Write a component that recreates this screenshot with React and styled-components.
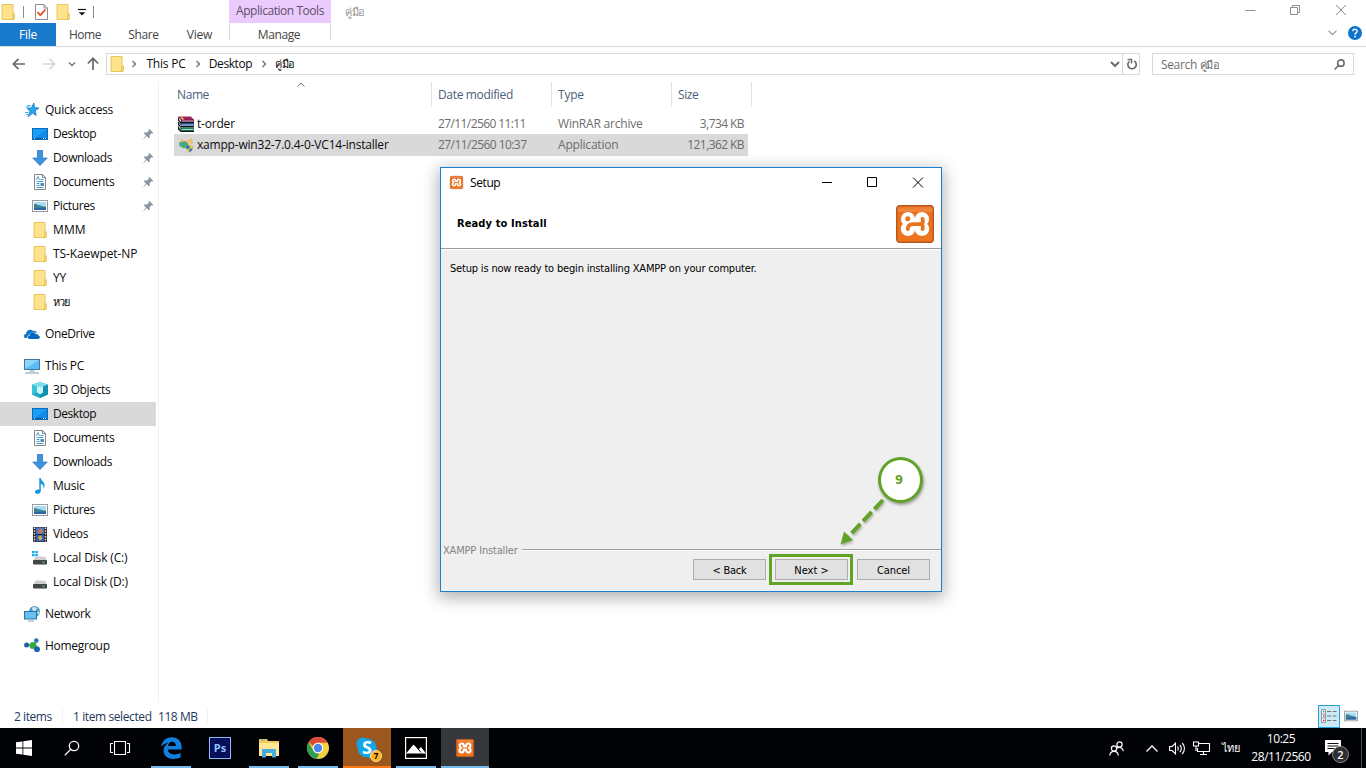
import React from "react";
import styled, { createGlobalStyle } from "styled-components";

const UI = `"Open Sans", "Noto Sans", "Liberation Sans", sans-serif`;
const TAHOMA = `"DejaVu Sans Condensed", "DejaVu Sans", sans-serif`;

const Global = createGlobalStyle`
  * { box-sizing: border-box; }
  body { margin: 0; background: #fff; overflow: hidden; }
  svg { display: block; flex: none; overflow: visible; }
`;

const Screen = styled.div`
  position: relative;
  width: 1366px;
  height: 768px;
  display: flex;
  flex-direction: column;
  background: #fff;
  font-family: ${UI};
  font-size: 12px;
  color: #0c0c0c;
  overflow: hidden;
`;

const Label = styled.span`
  white-space: pre;
  line-height: 16px;
  letter-spacing: ${(p) => p.$ls ?? -0.2}px;
  color: ${(p) => p.$color || "inherit"};
  font-size: ${(p) => p.$size || 12}px;
`;

/* ---------- Title bar and ribbon ---------- */
const Ribbon = styled.header`
  height: 47px;
  display: flex;
  border-bottom: 1px solid #dadbdc;
  flex: none;
`;
const RibbonLeft = styled.div`
  width: 229px;
  display: flex;
  flex-direction: column;
`;
const QuickBar = styled.div`
  height: 23px;
  display: flex;
  align-items: center;
  padding-left: 1px;
`;
const QuickItem = styled.div`
  width: ${(p) => p.$w}px;
  flex: none;
`;
const TabRow = styled.div`
  height: 23px;
  display: flex;
`;
const Tab = styled.div`
  width: ${(p) => p.$w}px;
  display: flex;
  align-items: center;
  justify-content: center;
  padding-top: 1px;
  background: ${(p) => (p.$file ? "#1979ca" : "transparent")};
  color: ${(p) => (p.$file ? "#fff" : "#444")};
`;
const ContextGroup = styled.div`
  width: 102px;
  height: 40px;
  background: linear-gradient(#dcdcdc, #dcdcdc) 0 23px / 1px 17px no-repeat,
    linear-gradient(#dcdcdc, #dcdcdc) 101px 23px / 1px 17px no-repeat;
`;
const ContextTitle = styled.div`
  height: 23px;
  background: #ebcbfd;
  color: #5d4f68;
  text-align: center;
  padding-top: 2px;
`;
const ContextTab = styled.div`
  text-align: center;
  color: #444;
  padding: 3px 2px 0 0;
`;
const WindowTitle = styled.div`
  flex: 1;
  padding: 3px 0 0 14px;
`;
const RibbonRight = styled.div`
  width: 140px;
  display: flex;
  flex-direction: column;
`;
const Captions = styled.div`
  height: 21px;
  display: flex;
  align-items: center;
  justify-content: flex-end;
  gap: 35px;
  padding-right: 20px;
`;
const HelpRow = styled.div`
  height: 27px;
  display: flex;
  align-items: center;
  justify-content: flex-end;
  gap: 11px;
  padding-right: 4px;
`;

/* ---------- Address row ---------- */
const AddressRow = styled.div`
  height: 34px;
  display: flex;
  align-items: center;
  padding: 0 12px 0 12px;
  flex: none;
`;
const NavButtons = styled.div`
  width: 94px;
  display: flex;
  align-items: center;
`;
const AddressBox = styled.div`
  width: 1034px;
  height: 22px;
  border: 1px solid #d9d9d9;
  display: flex;
  align-items: center;
  padding-left: 3px;
`;
const Crumb = styled.div`
  display: flex;
  align-items: center;
  justify-content: ${(p) => (p.$center ? "center" : "flex-start")};
  width: ${(p) => p.$w}px;
`;
const Spacer = styled.div`
  flex: 1;
`;
const RefreshCell = styled.div`
  width: 17px;
  height: 20px;
  border-left: 1px solid #d9d9d9;
  display: flex;
  align-items: center;
  justify-content: center;
  margin-left: 2px;
  padding-left: 1px;
`;
const SearchBox = styled.div`
  width: 202px;
  height: 22px;
  margin-left: 12px;
  border: 1px solid #d9d9d9;
  display: flex;
  align-items: center;
  justify-content: space-between;
  padding: 0 8px 0 8px;
`;

/* ---------- Main ---------- */
const Main = styled.main`
  height: 622px;
  display: flex;
  flex: none;
`;
const Sidebar = styled.nav`
  width: 159px;
  border-right: 1px solid #f1f1f1;
  padding-top: 17px;
`;
const NavRow = styled.div`
  width: 156px;
  height: 24px;
  margin-top: ${(p) => (p.$gap ? 8 : 0)}px;
  padding-left: ${(p) => (p.$root ? 24 : 32)}px;
  padding-right: 2px;
  display: flex;
  align-items: center;
  gap: 5px;
  background: ${(p) => (p.$active ? "#d9d9d9" : "transparent")};
`;
const Files = styled.section`
  flex: 1;
  padding-left: 15px;
`;
const HeadRow = styled.div`
  height: 32px;
  display: flex;
  padding-top: 1px;
`;
const HeadCell = styled.div`
  width: ${(p) => p.$w}px;
  height: 25px;
  display: flex;
  align-items: center;
  position: relative;
  padding-left: ${(p) => p.$pad}px;
  border-right: 1px solid #e2e2e2;
`;
const SortMark = styled.div`
  position: absolute;
  left: 123px;
  top: 0;
`;
const FileRow = styled.div`
  width: 574px;
  height: ${(p) => p.$h}px;
  display: flex;
  align-items: center;
  background: ${(p) => (p.$selected ? "#d9d9d9" : "transparent")};
`;
const FileCell = styled.div`
  width: ${(p) => p.$w}px;
  padding-left: ${(p) => p.$pad || 0}px;
  display: flex;
  align-items: center;
  justify-content: ${(p) => (p.$right ? "flex-end" : "flex-start")};
  gap: 2px;
`;

/* ---------- Status bar ---------- */
const StatusBar = styled.div`
  height: 25px;
  display: flex;
  align-items: center;
  padding-left: 14px;
  color: #1e395b;
  flex: none;
`;
const StatusCell = styled.div`
  width: ${(p) => p.$w}px;
  height: 16px;
  margin-right: ${(p) => p.$mr || 0}px;
  border-right: ${(p) => (p.$line ? "1px solid #f3f3f3" : "0")};
`;
const ViewButton = styled.div`
  width: 22px;
  height: 23px;
  margin-top: 1px;
  display: flex;
  align-items: center;
  justify-content: center;
  border: 1px solid ${(p) => (p.$on ? "#26a0da" : "transparent")};
  background: ${(p) => (p.$on ? "#cde8f6" : "transparent")};
`;

/* ---------- Setup dialog ---------- */
const Dialog = styled.div`
  position: absolute;
  left: 440px;
  top: 167px;
  width: 502px;
  height: 425px;
  border: 1px solid #1b7fcf;
  background: #efefef;
  display: flex;
  flex-direction: column;
  box-shadow: 0 4px 15px 2px rgba(0, 0, 0, 0.3);
  color: #000;
`;
const DialogTitle = styled.div`
  height: 29px;
  background: #fff;
  display: flex;
  align-items: center;
  padding: 0 18px 0 9px;
`;
const DialogHead = styled.div`
  height: 52px;
  background: #fff;
  border-bottom: 1px solid #9c9c9c;
  display: flex;
  justify-content: space-between;
  padding: 8px 7px 0 16px;
`;
const DialogHeading = styled.div`
  font: bold 11px/16px ${TAHOMA};
  letter-spacing: 0.12px;
  padding-top: 11px;
`;
const DialogBody = styled.div`
  flex: 1;
  border-top: 1px solid #fff;
  padding: 11px 9px;
  font: 11px/16px ${TAHOMA};
  letter-spacing: -0.18px;
`;
const FooterLegend = styled.div`
  height: 16px;
  display: flex;
  align-items: center;
  padding-left: 2px;
  gap: 4px;
  font: 11px/18px ${TAHOMA};
  letter-spacing: -0.17px;
  color: #838383;
  white-space: nowrap;
`;
const Rule = styled.div`
  flex: 1;
  height: 2px;
  margin-bottom: 2px;
  background: #a0a0a0;
  border-bottom: 1px solid #fff;
`;
const DialogButtons = styled.div`
  height: 32px;
  display: flex;
  justify-content: flex-end;
  gap: 9px;
  padding: 0 11px;
`;
const DialogButton = styled.div`
  width: 73px;
  height: 21px;
  border: 1px solid #adadad;
  background: #e1e1e1;
  font: 11px/21px ${TAHOMA};
  letter-spacing: ${(p) => p.$ls || 0}px;
  text-align: center;
`;
const Highlight = styled.div`
  position: absolute;
  left: 769px;
  top: 554px;
  width: 84px;
  height: 31px;
  border: 3px solid #60a327;
`;
const StepBadge = styled.div`
  position: absolute;
  left: 878px;
  top: 457px;
  width: 45px;
  height: 46px;
  border: 3px solid #60a327;
  border-radius: 50%;
  background: #fff;
  color: #60a327;
  font: bold 13px/39px ${TAHOMA};
  text-align: center;
  padding-right: 3px;
  box-shadow: 1px 2px 3px rgba(0, 0, 0, 0.35);
`;
const ArrowLayer = styled.svg`
  position: absolute;
  left: 836px;
  top: 494px;
  filter: drop-shadow(1px 2px 1px rgba(0, 0, 0, 0.25));
`;

/* ---------- Taskbar ---------- */
const Taskbar = styled.footer`
  height: 40px;
  background: #010206;
  display: flex;
  color: #fff;
  flex: none;
`;
const TaskButton = styled.div`
  width: 48px;
  height: 40px;
  margin-right: ${(p) => p.$mr || 0}px;
  display: flex;
  align-items: center;
  justify-content: center;
  background: ${(p) =>
    p.$line
      ? `linear-gradient(${p.$line}, ${p.$line}) center bottom / ${p.$full ? 48 : 40}px 2px no-repeat ${p.$bg || "transparent"}`
      : "transparent"};
`;
const TrayItem = styled.div`
  width: ${(p) => p.$w}px;
  display: flex;
  align-items: center;
  justify-content: center;
`;
const Clock = styled.div`
  width: 74px;
  display: flex;
  flex-direction: column;
  align-items: center;
  padding-top: 3px;
  gap: 2px;
`;
const ShowDesktop = styled.div`
  width: 5px;
  border-left: 1px solid #4d4e52;
`;

/* ---------- Icons ---------- */
const Folder = ({ w = 16 }) => (
  <svg width={w} height="16" viewBox="0 0 16 16">
    <path d="M2 .5h11v9l1 1v5H2z" fill="#ffe28c" stroke="#e9c655" />
    <path d="M12.700 15.500v-5l1.600-.8v5z" fill="#ffe9a6" stroke="#dfb93d" strokeWidth=".8" />
  </svg>
);
const BarFolder = () => (
  <svg width="14" height="16" viewBox="0 0 14 16">
    <path d="M1 .5h11v9l1 1v5H1z" fill="#ffe28c" stroke="#e9c655" />
    <path d="M11.700 15.500v-5l1.600-.8v5z" fill="#ffe9a6" stroke="#dfb93d" strokeWidth=".8" />
  </svg>
);
const CheckDoc = () => (
  <svg width="13" height="16" viewBox="0 0 13 16">
    <path d="M.5.5h8.500l3.500 3.500v11.500H.5z" fill="#fff" stroke="#8c8c8c" />
    <path d="M9 .5V4h3.500" fill="none" stroke="#8c8c8c" />
    <path d="M2.500 8.200l2.800 3L10.500 5.500" fill="none" stroke="#e8501e" strokeWidth="1.800" />
  </svg>
);
const Chevron = ({ d = "right", c = "#777", s = 6, sw = 1.5 }) => {
  const rot = { right: 0, down: 90, left: 180, up: -90 }[d];
  return (
    <svg width={s + 2} height={s + 2} viewBox="0 0 8 8">
      <path d="M2.500 1l3 3-3 3" fill="none" stroke={c} strokeWidth={sw} transform={`rotate(${rot} 4 4)`} />
    </svg>
  );
};
const Arrow = ({ c, rot = 0 }) => (
  <svg width="14" height="14" viewBox="0 0 14 14">
    <path d="M13 7H1.500M6.500 1.800L1.300 7l5.200 5.200" fill="none" stroke={c} strokeWidth="1.700" transform={`rotate(${rot} 7 7)`} />
  </svg>
);
const Star = () => (
  <svg width="16" height="16" viewBox="0 0 16 16">
    <path d="M9.800 1l.9 4.600 4.300.5-3.700 2.600.9 4.800-3.600-2.300-4.600 3.800 1.900-5.600L3 6.400l4.400-.6z" fill="#2aa4ee" stroke="#1576c4" strokeWidth=".7" />
    <path d="M3 3.500h4M1.500 5h4M1 10.500h3.500M2 12.500h2" stroke="#42aef0" />
  </svg>
);
const DesktopIcon = () => (
  <svg width="16" height="16" viewBox="0 0 16 16">
    <rect x=".5" y="2.500" width="15" height="11" fill="#18a0f4" stroke="#0a6cb8" />
    <path d="M1 13L15 3v10z" fill="#1289e6" />
    <path d="M1 12.500h14" stroke="#065797" />
    <path d="M2 12.500h1M11 12.500h1M13 12.500h1" stroke="#e8f5ff" />
  </svg>
);
const DownloadIcon = () => (
  <svg width="16" height="16" viewBox="0 0 16 16">
    <path d="M5.500.5h5V8h4.700L8 15.500.8 8h4.700z" fill="#3f93dc" stroke="#2b79c3" strokeWidth=".8" />
  </svg>
);
const DocumentIcon = () => (
  <svg width="16" height="16" viewBox="0 0 16 16">
    <path d="M2.500.5h8l3 3v12h-11z" fill="#fff" stroke="#858585" />
    <path d="M10.500.5v3h3" fill="none" stroke="#858585" />
    <path d="M4.500 6l1.500-3.500L7.500 6M8.500 5.500h3M4.500 7.500h7M4.500 9.500h3M4.500 11.500h3M4.500 13.500h7" fill="none" stroke="#3792cf" strokeWidth=".9" />
    <rect x="8.500" y="9" width="3.500" height="3" fill="#4a8cad" />
  </svg>
);
const PictureIcon = ({ w = 16, h = 16 }) => (
  <svg width={w} height={h} viewBox="0 0 16 16">
    <rect x=".5" y="2.500" width="15" height="11" fill="#fff" stroke="#9a9a9a" />
    <rect x="2" y="4" width="12" height="8" fill="#a8dcf6" />
    <path d="M2 6c3 0 6 2 12 3v3H2z" fill="#41818f" />
    <path d="M2 10.500l12-1.200V12H2z" fill="#2b67a6" />
  </svg>
);
const OneDriveIcon = () => (
  <svg width="16" height="16" viewBox="0 0 16 16">
    <path d="M1 12C-.8 11-.3 8 2 8c0-4 4.500-5.800 7-3 2-.6 3.700.4 4 2-4-1-7 0-7.500 2-2 .3-2.500 1.800-2 3z" fill="#1278cc" />
    <path d="M5.500 13c-2.300-.6-2-3.500.4-3.600C6 6.500 10 5.600 11.500 8c1.800-.4 2.800.6 2.900 1.600 2 .5 2 3-.2 3.400z" fill="#0868bb" />
  </svg>
);
const PCIcon = () => (
  <svg width="16" height="16" viewBox="0 0 16 16">
    <rect x=".5" y="1.500" width="15" height="10" fill="#5abdf5" stroke="#45799c" />
    <path d="M1 11L15 2H1z" fill="#8bd4fb" />
    <path d="M5.500 13h5M1 15h14" stroke="#8399a9" />
  </svg>
);
const CubeIcon = () => (
  <svg width="16" height="16" viewBox="0 0 16 16">
    <path d="M0 2.500L8 0l8 2.500v10L8 16l-8-3.500z" fill="#35c3d6" />
    <path d="M0 2.500L8 0l8 2.500-5 2H5z" fill="#7fdde8" />
    <path d="M11 4.500l5-2v10L8 16v-4l3-2z" fill="#0f91ad" />
    <path d="M5 4.500h6v6l-3 2-3-2z" fill="#c9f3f6" />
    <path d="M0 12.500l5-2 3 2V16z" fill="#22a9c0" />
  </svg>
);
const MusicIcon = () => (
  <svg width="16" height="16" viewBox="0 0 16 16">
    <path d="M7.300 0h1.500c.2 3 4 4 3.800 7.500-.1 1.500-.7 2.500-1.200 3 .6-3-1-4.300-2.600-4.700v7.100c0 3.500-5.800 4-5.800.9 0-2 2.400-2.900 4.300-2.100z" fill="#1793e6" />
  </svg>
);
const VideoIcon = () => (
  <svg width="16" height="16" viewBox="0 0 16 16">
    <rect x="1" y="1" width="14" height="15" fill="#2e2e31" />
    <path d="M2.500 1.500V16M13.500 1.500V16" stroke="#e6e6e6" strokeWidth="1.300" strokeDasharray="1.500 1.300" />
    <rect x="4" y="1.500" width="8" height="6.500" fill="#5278c2" />
    <rect x="4" y="9" width="8" height="6.500" fill="#3860b4" />
    <path d="M8 2.500l3 2-2 3-3-1z" fill="#e0743a" />
    <path d="M6 11l3-1.500L10.500 13l-3 1.500z" fill="#d7b13b" />
  </svg>
);
const DiskIcon = ({ win }) => (
  <svg width="16" height="16" viewBox="0 0 16 16">
    {win && <path d="M0 1h2.500v2.300H0zM3.300 1h2.500v2.300H3.300zM0 4h2.500v2.300H0zM3.300 4h2.500v2.300H3.300z" fill="#12a8ef" />}
    <path d="M3.500 6.500h9.500l2 4H1.200z" fill="#cfcfcf" />
    <rect x="1" y="10" width="14" height="4.500" rx=".7" fill="#454545" />
    <rect x="10.500" y="11.700" width="1.800" height="1.300" fill="#3bea4a" />
  </svg>
);
const NetworkIcon = () => (
  <svg width="16" height="16" viewBox="0 0 16 16">
    <circle cx="10.500" cy="5.500" r="5.500" fill="#4f9dc6" />
    <path d="M8 2c2-2 5-1 5 1l-2 2-2 1zM13 6l2.500-.5-1 3.500z" fill="#cfe7ef" />
    <rect x=".5" y="5.500" width="12" height="7.500" fill="#67bff2" stroke="#2b74a8" />
    <path d="M4 15h6" stroke="#8aa0ae" />
  </svg>
);
const HomegroupIcon = () => (
  <svg width="16" height="16" viewBox="0 0 16 16">
    <path d="M3 7l6 .5L12 3M9 8l4 4" stroke="#88b7dc" fill="none" />
    <circle cx="9" cy="7.500" r="3.600" fill="#35ad3a" />
    <circle cx="2.600" cy="7" r="2.500" fill="#1d5faa" />
    <circle cx="12.300" cy="2.600" r="2.300" fill="#2673bf" />
    <circle cx="13" cy="11.200" r="2.900" fill="#1c62b3" />
  </svg>
);
const Pin = () => (
  <svg width="11" height="12" viewBox="0 0 11 12">
    <path d="M6.200.8l4.200 4.200-1.200.5-.8-.2-1.800 1.900.3 2.300-1 .8-2.300-2.200L.5 11.500l-.2-.4L3 7.500.8 5.300l.9-1 2.400.2L5.900 2.700l-.2-.9z" fill="#8796a2" />
  </svg>
);
const RarIcon = () => (
  <svg width="17" height="16" viewBox="0 0 17 16">
    <path d="M0 .5h13l3 3.500H3z" fill="#a3245f" />
    <path d="M0 .5L3 4v2.500h13V3.500H3z" fill="#741450" />
    <path d="M2 6.800h14v3.200H4L1 8z" fill="#2a62a8" />
    <path d="M2 11.200h14v3.800H4L1 13z" fill="#1b8a63" />
    <path d="M.6 1.500v3l2.400 2.200h13M.6 6v3L3 10.700h13M.6 10.500v2.700L3 15.400h13" fill="none" stroke="#151515" strokeWidth="1.300" />
    <path d="M4 5h11.500M4 9h11.500M4 13.500h11.500" stroke="#ddd" strokeWidth=".8" />
    <path d="M3 1.200l2.500 2.300" stroke="#f3ca3b" strokeWidth="1.500" />
  </svg>
);
const InstallerIcon = () => (
  <svg width="17" height="16" viewBox="0 0 17 16">
    <path d="M2.500 2L8 4l5.500-2.500L15 6l-4 3.500-8-2z" fill="#eebb70" />
    <path d="M7 6l6-2v5l-4 3-3-2z" fill="#f3cf8d" />
    <path d="M1 5.500l6-1.200 3.500 2.500-.5 4-4.500.5L1.500 9z" fill="#48a982" />
    <path d="M8 9.500c1.500 0 2.600-.5 3.500-1.200.9.700 2 1.200 3.500 1.200 0 3-1.200 4.500-3.500 5.900C9.200 14 8 12.500 8 9.500z" fill="#266fc4" />
    <path d="M11.500 8.300c.9.700 2 1.200 3.500 1.200 0 .9-.1 1.600-.3 2.200h-3.200zM11.500 11.700v3.700c-1.500-.8-2.700-2-3.200-3.700z" fill="#f2c63b" />
  </svg>
);
const XamppFace = () => (
  <>
    <defs>
      <linearGradient id="xo" x1="0" y1="0" x2="0" y2="1">
        <stop offset="0" stopColor="#e8742a" />
        <stop offset=".15" stopColor="#f08a43" />
        <stop offset=".17" stopColor="#ea6d1b" />
        <stop offset="1" stopColor="#ee751e" />
      </linearGradient>
    </defs>
    <rect x=".7" y=".7" width="36.600" height="36.600" rx="3" fill="url(#xo)" stroke="#b9571a" strokeWidth="1.400" />
  </>
);
const XamppIcon = ({ s }) => (
  <svg width={s} height={s} viewBox="0 0 38 38">
    <XamppFace />
    <path
      d="M16 15.500C17.200 12 15.500 9.400 12.300 9.400c-3.200 0-5.200 2.400-4.600 5.100.4 2 1.700 3.300 3.400 4.300-2.600 1-4.200 3-4 5.400.3 2.700 2.500 4.400 5.100 4.200 3.100-.3 4.100-2.700 4.300-5.900h5c.1 3.600 1.500 5.900 4.400 6 2.900.1 4.900-1.900 4.900-4.700 0-2.300-1.400-4-3.700-5 2.300-1 3.500-2.600 3.400-4.800-.1-2.800-2.100-4.700-4.900-4.600-3.200.1-4.600 2.500-4 6.100z"
      fill="none"
      stroke="#fff"
      strokeWidth="4.500"
      strokeLinejoin="round"
    />
  </svg>
);
const XamppLogo = () => (
  <svg width="38" height="38" viewBox="0 0 38 38">
    <XamppFace />
    <g fill="#fff">
      <circle cx="12" cy="14" r="7.100" />
      <circle cx="12" cy="23.800" r="7.200" />
      <circle cx="26" cy="14" r="7.100" />
      <circle cx="26" cy="23.800" r="7.200" />
      <rect x="13" y="15" width="12" height="9" />
    </g>
    <circle cx="11.700" cy="13.700" r="2.500" fill="#ec711c" />
    <path
      d="M11.800 24c0-3.300 2-4.900 5.400-4.900h7c2.500 0 3.200-2.500 2.300-5.200M24.500 19.100c2.300.5 3 2.600 2 5"
      fill="none"
      stroke="#ec711c"
      strokeWidth="3.800"
      strokeLinecap="round"
    />
  </svg>
);
const Magnifier = ({ c, s, sw = 2 }) => (
  <svg width={s} height={s} viewBox="0 0 16 16">
    <circle cx="10" cy="6" r="4.700" fill="none" stroke={c} strokeWidth={sw} />
    <path d="M6.600 9.400L.8 15.200" stroke={c} strokeWidth={sw} />
  </svg>
);
const EdgeIcon = () => (
  <svg width="21" height="22" viewBox="0 0 21 22">
    <path
      d="M.2 9.800C1 3.800 5 .2 10.800.2c6 0 9.800 4 9.800 9.800v2.600H6.900c.2 3.500 3 4.900 6.400 4.900 2.400 0 4.500-.7 6.300-1.800v4.600c-2 1.100-4.500 1.700-7.300 1.700C6.100 22 2.600 18.400 2.600 13.500c0-3.300 1.900-6.100 5.100-7.700C4.400 6 1.800 7.500.2 9.800zM7 9h7.900c0-2.700-1.300-4.300-3.700-4.300C9 4.700 7.400 6.500 7 9z"
      fill="#1180df"
      fillRule="evenodd"
    />
  </svg>
);
const PsBox = styled.div`
  width: 22px;
  height: 22px;
  border: 1.5px solid #7fc0f5;
  background: #0a0c5c;
  color: #8cc8f8;
  font: bold 11px/19px "Open Sans", sans-serif;
  text-align: center;
`;
const ExplorerIcon = () => (
  <svg width="22" height="19" viewBox="0 0 22 19">
    <path d="M1 0h8l1 2h11v15H1z" fill="#f3c957" />
    <path d="M1 4h20v13H1z" fill="#ffe795" />
    <path d="M3 1h4" stroke="#57b8dc" />
    <path d="M4 18.500V10h14v8.500h-4V14H8v4.500z" fill="#42aee0" />
  </svg>
);
const ChromeIcon = () => (
  <svg width="22" height="22" viewBox="0 0 22 22">
    <circle cx="11" cy="11" r="11" fill="#f4cf42" />
    <path d="M11 0a11 11 0 0 1 9.600 5.700H11a5.300 5.300 0 0 0-4.900 3.300L1.700 5.200A11 11 0 0 1 11 0z" fill="#dc4a3c" />
    <path d="M1.600 5.300L6.300 13.500A5.300 5.300 0 0 0 12.300 16.200L9.700 21.900A11 11 0 0 1 1.600 5.300z" fill="#2f9e57" />
    <circle cx="11" cy="11" r="5.200" fill="#fff" />
    <circle cx="11" cy="11" r="4.200" fill="#4a86ec" />
  </svg>
);
const SkypeWrap = styled.div`
  position: relative;
  width: 22px;
  height: 22px;
`;
const SkypeS = styled.div`
  position: absolute;
  left: 0;
  top: 0;
  width: 22px;
  font: bold 18px/21px "Open Sans", sans-serif;
  text-align: center;
  color: #fff;
`;
const SkypeBadge = styled.div`
  position: absolute;
  left: 14px;
  top: 13px;
  width: 12px;
  height: 12px;
  border-radius: 50%;
  background: #ffb31c;
  border: 1px solid #ffe2a0;
  color: #000;
  font: bold 8px/10px "Open Sans", sans-serif;
  text-align: center;
`;
const Skype = () => (
  <SkypeWrap>
    <svg width="22" height="22" viewBox="0 0 22 22">
      <circle cx="11" cy="11" r="9.500" fill="#12a5e8" />
      <circle cx="6.500" cy="6.500" r="6" fill="#12a5e8" />
      <circle cx="15.500" cy="15.500" r="6" fill="#12a5e8" />
    </svg>
    <SkypeS>S</SkypeS>
    <SkypeBadge>7</SkypeBadge>
  </SkypeWrap>
);
const NoticeWrap = styled.div`
  position: relative;
  width: 16px;
  height: 16px;
`;
const NoticeCount = styled.div`
  position: absolute;
  left: 7px;
  top: 6px;
  width: 17px;
  height: 17px;
  border-radius: 50%;
  border: 1px solid #8b8b8b;
  background: #2e2f33;
  font: 600 11px/15px "Open Sans", sans-serif;
  text-align: center;
`;

const NAV = [
  { t: "Quick access", i: <Star />, root: 1, ls: -0.27 },
  { t: "Desktop", i: <DesktopIcon />, pin: 1, ls: -0.45 },
  { t: "Downloads", i: <DownloadIcon />, pin: 1, ls: -0.4 },
  { t: "Documents", i: <DocumentIcon />, pin: 1, ls: -0.33 },
  { t: "Pictures", i: <PictureIcon />, pin: 1, ls: -0.4 },
  { t: "MMM", i: <Folder />, ls: 0.1 },
  { t: "TS-Kaewpet-NP", i: <Folder />, ls: -0.1 },
  { t: "YY", i: <Folder /> },
  { t: "หวย", i: <Folder />, size: 11, ls: -0.8 },
  { t: "OneDrive", i: <OneDriveIcon />, root: 1, gap: 1, ls: -0.4 },
  { t: "This PC", i: <PCIcon />, root: 1, gap: 1 },
  { t: "3D Objects", i: <CubeIcon />, ls: -0.35 },
  { t: "Desktop", i: <DesktopIcon />, active: 1, ls: -0.45 },
  { t: "Documents", i: <DocumentIcon />, ls: -0.33 },
  { t: "Downloads", i: <DownloadIcon />, ls: -0.4 },
  { t: "Music", i: <MusicIcon /> },
  { t: "Pictures", i: <PictureIcon />, ls: -0.4 },
  { t: "Videos", i: <VideoIcon />, ls: -0.35 },
  { t: "Local Disk (C:)", i: <DiskIcon win />, ls: -0.15 },
  { t: "Local Disk (D:)", i: <DiskIcon />, ls: -0.2 },
  { t: "Network", i: <NetworkIcon />, root: 1, gap: 1, ls: -0.33 },
  { t: "Homegroup", i: <HomegroupIcon />, root: 1, gap: 1, ls: -0.28 },
];

const FILES = [
  { n: "t-order", d: "27/11/2560 11:11", t: "WinRAR archive", s: "3,734 KB", i: <RarIcon />, h: 21, dls: -0.6 },
  { n: "xampp-win32-7.0.4-0-VC14-installer", d: "27/11/2560 10:37", t: "Application", s: "121,362 KB", i: <InstallerIcon />, h: 22, sel: 1, dls: -0.56 },
];

const BLUE = "#76b9ed";
const GREY = "#6d6d6d";
const HEAD = "#4c607a";

export default function App() {
  return (
    <Screen>
      <Global />
      <Ribbon>
        <RibbonLeft>
          <QuickBar>
            <QuickItem $w={21}><BarFolder /></QuickItem>
            <QuickItem $w={13}><svg width="2" height="12"><path d="M1.500 0v12" stroke="#8a8a8a" /></svg></QuickItem>
            <QuickItem $w={21}><CheckDoc /></QuickItem>
            <QuickItem $w={22}><BarFolder /></QuickItem>
            <QuickItem $w={15}>
              <svg width="8" height="7" viewBox="0 0 8 7"><path d="M0 1.500h8" stroke="#111" strokeWidth="1.200" /><path d="M.7 4.200h6.600L4 7.500z" fill="#111" /></svg>
            </QuickItem>
            <QuickItem $w={4}><svg width="2" height="12"><path d="M.5 0v12" stroke="#8a8a8a" /></svg></QuickItem>
          </QuickBar>
          <TabRow>
            <Tab $w={56} $file><Label>File</Label></Tab>
            <Tab $w={58}><Label $ls={-0.45}>Home</Label></Tab>
            <Tab $w={59}><Label $ls={-0.4}>Share</Label></Tab>
            <Tab $w={53}><Label>View</Label></Tab>
          </TabRow>
        </RibbonLeft>
        <ContextGroup>
          <ContextTitle><Label $ls={-0.45}>Application Tools</Label></ContextTitle>
          <ContextTab><Label $ls={-0.4}>Manage</Label></ContextTab>
        </ContextGroup>
        <WindowTitle><Label $color="#999" $size={11} $ls={-0.5}>คู่มือ</Label></WindowTitle>
        <RibbonRight>
          <Captions>
            <svg width="10" height="10"><path d="M-.5 5.500h10" stroke="#8e8e8e" /></svg>
            <svg width="10" height="10" viewBox="0 0 10 10"><path d="M-.5 2.500h7v7h-7zM1.500 2.500v-2h7v7h-2" fill="none" stroke="#8e8e8e" /></svg>
            <svg width="10" height="10"><path d="M0 0l10 10M10 0L0 10" stroke="#8e8e8e" /></svg>
          </Captions>
          <HelpRow>
            <svg width="9" height="6"><path d="M.5.7l4 4 4-4" fill="none" stroke="#999" strokeWidth="1.200" /></svg>
            <svg width="14" height="14" viewBox="0 0 14 14">
              <circle cx="7" cy="7" r="7" fill="#0f73ce" />
              <path d="M4.800 5.200c.1-2.600 4.500-2.400 4.400 0C9.200 6.700 7 6.700 7 8.700" fill="none" stroke="#fff" strokeWidth="1.400" />
              <rect x="6.200" y="9.800" width="1.600" height="1.600" fill="#fff" />
            </svg>
          </HelpRow>
        </RibbonRight>
      </Ribbon>

      <AddressRow>
        <NavButtons>
          <Crumb $w={30}><Arrow c="#6a6a6a" /></Crumb>
          <Crumb $w={26}><Arrow c="#d8d8d8" rot={180} /></Crumb>
          <Crumb $w={18}><Chevron d="down" c="#777" /></Crumb>
          <Crumb $w={20}><Arrow c="#6a6a6a" rot={90} /></Crumb>
        </NavButtons>
        <AddressBox>
          <Crumb $w={17}><BarFolder /></Crumb>
          <Crumb $w={14} $center><Chevron /></Crumb>
          <Crumb $w={50} $center><Label>This PC</Label></Crumb>
          <Crumb $w={13} $center><Chevron /></Crumb>
          <Crumb $w={53} $center><Label $ls={-0.4}>Desktop</Label></Crumb>
          <Crumb $w={13} $center><Chevron /></Crumb>
          <Crumb $w={30} $center><Label $size={11} $ls={-0.5}>คู่มือ</Label></Crumb>
          <Spacer />
          <svg width="10" height="8"><path d="M1 2l4 4 4-4" fill="none" stroke="#6c6c6c" strokeWidth="2" /></svg>
          <RefreshCell>
            <svg width="12" height="12" viewBox="0 0 12 12">
              <path d="M8.300 3A4.200 4.200 0 1 1 3.300 3.400" fill="none" stroke="#6c6c6c" strokeWidth="1.700" />
              <path d="M1.500 1.500h4v4" fill="none" stroke="#6c6c6c" strokeWidth="1.500" />
            </svg>
          </RefreshCell>
        </AddressBox>
        <SearchBox>
          <span>
            <Label $color={GREY} $ls={-0.35}>Search </Label>
            <Label $color={GREY} $size={11} $ls={-0.5}>คู่มือ</Label>
          </span>
          <Magnifier c="#6c6c6c" s={11} sw={2.300} />
        </SearchBox>
      </AddressRow>

      <Main>
        <Sidebar>
          {NAV.map((r, k) => (
            <NavRow key={k} $root={r.root} $gap={r.gap} $active={r.active}>
              {r.i}
              <Label $ls={r.ls} $size={r.size}>{r.t}</Label>
              {r.pin && (<><Spacer /><Pin /></>)}
            </NavRow>
          ))}
        </Sidebar>
        <Files>
          <HeadRow>
            <HeadCell $w={258} $pad={3}>
              <Label $color={HEAD} $ls={-0.4}>Name</Label>
              <SortMark><svg width="8" height="5"><path d="M.5 4.500L4 1l3.500 3.500" fill="none" stroke="#777" /></svg></SortMark>
            </HeadCell>
            <HeadCell $w={120} $pad={6}><Label $color={HEAD} $ls={-0.34}>Date modified</Label></HeadCell>
            <HeadCell $w={120} $pad={6}><Label $color={HEAD}>Type</Label></HeadCell>
            <HeadCell $w={80} $pad={6}><Label $color={HEAD} $ls={-0.4}>Size</Label></HeadCell>
          </HeadRow>
          {FILES.map((f) => (
            <FileRow key={f.n} $h={f.h} $selected={f.sel}>
              <FileCell $w={264} $pad={4}>{f.i}<Label>{f.n}</Label></FileCell>
              <FileCell $w={120}><Label $color={GREY} $ls={f.dls}>{f.d}</Label></FileCell>
              <FileCell $w={90}><Label $color={GREY}>{f.t}</Label></FileCell>
              <FileCell $w={96} $right><Label $color={GREY} $ls={-0.58}>{f.s}</Label></FileCell>
            </FileRow>
          ))}
        </Files>
      </Main>

      <StatusBar>
        <StatusCell $w={49} $mr={10} $line><Label $ls={-0.45}>2 items</Label></StatusCell>
        <StatusCell $w={85}><Label $ls={-0.4}>1 item selected</Label></StatusCell>
        <StatusCell $w={50} $line><Label $ls={-0.45}>118 MB</Label></StatusCell>
        <Spacer />
        <ViewButton $on>
          <svg width="16" height="14" viewBox="0 0 16 14">
            <path d="M.5.5h4v13h-4zM.5 5h4M.5 9h4" fill="#fff" stroke="#999" />
            <path d="M6 2.500h4M11.500 2.500h4M6 7h4M11.500 7h4M6 11.500h4M11.500 11.500h4" stroke="#777" />
            <path d="M2 2.500h1.500" stroke="#2a9a4b" strokeWidth="1.500" /><path d="M2 7h1.500" stroke="#1f7ad1" strokeWidth="1.500" /><path d="M2 11.500h1.500" stroke="#d0242c" strokeWidth="1.500" />
          </svg>
        </ViewButton>
        <ViewButton><PictureIcon w={14} h={14} /></ViewButton>
        <QuickItem $w={4} />
      </StatusBar>

      <Taskbar>
        <TaskButton>
          <svg width="16" height="16" viewBox="0 0 16 16"><path d="M0 2.300l6.500-.9v6.200H0zM7.300 1.300L16 0v7.600H7.300zM0 8.400h6.500v6.200L0 13.700zM7.300 8.400H16V16l-8.700-1.200z" fill="#fff" /></svg>
        </TaskButton>
        <TaskButton><Magnifier c="#fff" s={16} sw={1.3} /></TaskButton>
        <TaskButton $mr={3}>
          <svg width="20" height="14" viewBox="0 0 20 14"><path d="M4.500.5h11v13h-11zM3 2.500H.5v9H3M17 2.500h2.500v9H17" fill="none" stroke="#fff" strokeWidth="1.100" /></svg>
        </TaskButton>
        <TaskButton $mr={1} $line={BLUE}><EdgeIcon /></TaskButton>
        <TaskButton $mr={1}><PsBox>Ps</PsBox></TaskButton>
        <TaskButton $mr={1} $line={BLUE}><ExplorerIcon /></TaskButton>
        <TaskButton $mr={1} $line={BLUE}><ChromeIcon /></TaskButton>
        <TaskButton $mr={1} $line="#ff7a12" $full $bg="#9b571d"><Skype /></TaskButton>
        <TaskButton $mr={1} $line={BLUE}>
          <svg width="22" height="22" viewBox="0 0 22 22"><rect x=".6" y=".6" width="20.800" height="20.800" fill="#000" stroke="#fff" strokeWidth="1.200" /><path d="M1 16.500L8.500 7.500l5 5 2.500-2.500 5 6.500z" fill="#fff" /><path d="M12 10.500l4 5" stroke="#000" /></svg>
        </TaskButton>
        <TaskButton $line={BLUE} $full $bg="#35373b"><XamppIcon s={18} /></TaskButton>
        <Spacer />
        <TrayItem $w={18}>
          <svg width="15" height="15" viewBox="0 0 15 15"><g fill="none" stroke="#fff" strokeWidth="1.200"><circle cx="10.500" cy="3.500" r="2.600" /><circle cx="5" cy="7.500" r="2.600" /><path d="M.8 14.500c.3-5.500 8.200-5.500 8.500 0M8 7.300c2.500-2 6-.5 6.400 3" /></g></svg>
        </TrayItem>
        <TrayItem $w={54}>
          <svg width="12" height="7"><path d="M.5 6.500l5.500-5.500 5.500 5.500" fill="none" stroke="#fff" strokeWidth="1.300" /></svg>
        </TrayItem>
        <TrayItem $w={0}>
          <svg width="17" height="13" viewBox="2 0 17 13"><path d="M.6 4.500h2.600L6.500 1.200v10.600L3.200 8.500H.6z" fill="none" stroke="#fff" strokeWidth="1.100" /><path d="M8.500 4.500c1 1 1 3 0 4M10.800 2.800c2 2 2 5.400 0 7.400M13.200 1c3 3 3 8 0 11" fill="none" stroke="#fff" strokeWidth="1.100" /></svg>
        </TrayItem>
        <TrayItem $w={44}>
          <svg width="17" height="14" viewBox="0 0 17 14"><path d="M6 2.500h10.500v8H4.500V7M10.500 10.500v3M7 13.500h7M.5 1h5v4h-5zM3 5v5M1.500 7.500" fill="none" stroke="#fff" strokeWidth="1.100" /></svg>
        </TrayItem>
        <TrayItem $w={15}><Label $size={11} $ls={-0.5}>ไทย</Label></TrayItem>
        <QuickItem $w={6} />
        <Clock><Label $ls={-0.45}>10:25</Label><Label $ls={-0.42}>28/11/2560</Label></Clock>
        <TrayItem $w={30}>
          <NoticeWrap>
            <svg width="16" height="16" viewBox="0 0 16 16"><path d="M0 0h16v12H7l-3.500 3.500V12H0z" fill="#fff" /><path d="M2.500 3.500h11M2.500 6h11M2.500 8.500h7" stroke="#111" /></svg>
            <NoticeCount>2</NoticeCount>
          </NoticeWrap>
        </TrayItem>
        <QuickItem $w={13} />
        <ShowDesktop />
      </Taskbar>

      <Dialog>
        <DialogTitle>
          <XamppIcon s={13} />
          <QuickItem $w={7} />
          <Label $ls={-0.4}>Setup</Label>
          <Spacer />
          <svg width="102" height="11" viewBox="0 0 102 11" fill="none" stroke="#000"><path d="M1 5.500h10M46.500.5h9v9h-9zM92 .5l10 10M102 .5l-10 10" /></svg>
        </DialogTitle>
        <DialogHead>
          <DialogHeading>Ready to Install</DialogHeading>
          <XamppLogo />
        </DialogHead>
        <DialogBody>Setup is now ready to begin installing XAMPP on your computer.</DialogBody>
        <FooterLegend>XAMPP Installer<Rule /></FooterLegend>
        <DialogButtons>
          <DialogButton $ls={-0.25}>&lt; Back</DialogButton>
          <DialogButton>Next &gt;</DialogButton>
          <DialogButton $ls={-0.1}>Cancel</DialogButton>
        </DialogButtons>
      </Dialog>
      <Highlight />
      <ArrowLayer width="52" height="56" viewBox="0 0 52 56">
        <path d="M47 6L13 42" stroke="#60a327" strokeWidth="4" strokeDasharray="12.500 4" />
        <path d="M4.500 50.500l3.500-13 9 8.500z" fill="#60a327" />
      </ArrowLayer>
      <StepBadge>9</StepBadge>
    </Screen>
  );
}
